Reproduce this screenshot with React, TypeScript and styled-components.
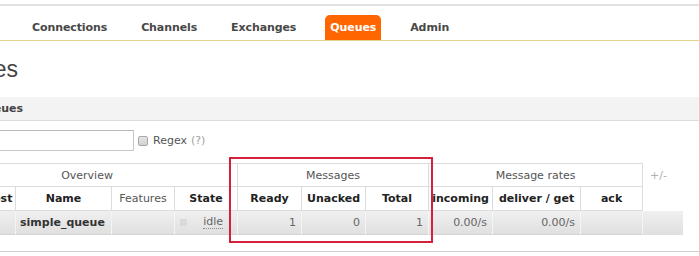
import React from "react";
import styled, { createGlobalStyle } from "styled-components";

const Global = createGlobalStyle`
  html, body { margin: 0; padding: 0; background: #fff; overflow: hidden; }
  body { font-family: "DejaVu Sans", Verdana, sans-serif; font-size: 11px; color: #484848; }
  * { box-sizing: border-box; }
`;

const Page = styled.div`
  width: 699px;
  height: 256px;
  overflow: hidden;
`;

const TopRule = styled.div`
  height: 6px;
  border-bottom: 2px solid #e2e2e2;
`;

const Nav = styled.ul`
  list-style: none;
  margin: 0;
  padding: 0 0 0 27px;
  height: 35px;
  border-bottom: 1px solid #e3d48e;
  display: flex;
  align-items: flex-end;
  gap: 24px;
`;

const NavItem = styled.li<{ $active?: boolean }>`
  height: 25px;
  line-height: 25px;
  padding: 0 5px;
  font-weight: bold;
  letter-spacing: -0.1px;
  border-radius: 5px 5px 0 0;
  color: ${(p) => (p.$active ? "#fff" : "#484848")};
  background: ${(p) => (p.$active ? "#ff6600" : "transparent")};
`;

const Main = styled.div`
  display: flex;
  flex-direction: column;
`;

const Tail = styled.span<{ $w: number }>`
  display: flex;
  justify-content: flex-end;
  width: ${(p) => p.$w}px;
  overflow: hidden;
  white-space: nowrap;
`;

const Title = styled.h1`
  margin: 15px 0 0;
  font-family: "Liberation Sans", Arial, sans-serif;
  font-weight: normal;
  font-size: 23px;
  line-height: 27px;
  color: #444;
`;

const SectionHeader = styled.h2`
  margin: 14px 0 0;
  height: 24px;
  background: #f3f3f3;
  border-bottom: 1px solid #dcdcdc;
  font-size: 11px;
  font-weight: bold;
  line-height: 23px;
  color: #444;
`;

const Section = styled.div`
  border-bottom: 1px solid #cfcfcf;
  padding-bottom: 16px;
`;

const FilterRow = styled.div`
  margin-top: 9px;
  display: flex;
  align-items: center;
  height: 21px;
  color: #555;
`;

const FilterInput = styled.input`
  flex-shrink: 0;
  width: 220px;
  height: 21px;
  border: 1px solid #c8c8c8;
  border-top-color: #b8b8b8;
  background: #fff;
  margin: 0;
`;

const Check = styled.span`
  width: 10px;
  height: 10px;
  margin: 0 5px 0 4px;
  border: 1px solid #a8a8a8;
  border-radius: 2px;
  background: linear-gradient(#e6e6e6, #d0d0d0);
`;

const Help = styled.span`
  color: #a0a0a0;
  margin-left: 4px;
`;

const TableWrap = styled.div`
  position: relative;
  margin-top: 12px;
`;

const Table = styled.table`
  border-collapse: separate;
  border-spacing: 0;
  table-layout: fixed;
  width: 686px;
  margin-left: -63px;
`;

const GroupTh = styled.th`
  height: 24px;
  padding: 0;
  border-top: 1px solid #dcdcdc;
  border-right: 1px solid #dcdcdc;
  border-bottom: 1px solid #dcdcdc;
  font-weight: normal;
  color: #555;
  text-align: center;
  background: #fff;
`;

const ColTh = styled.th<{ $plain?: boolean }>`
  height: 24px;
  padding: 0 2px;
  border-right: 1px solid #dcdcdc;
  border-bottom: 1px solid #dcdcdc;
  font-weight: ${(p) => (p.$plain ? "normal" : "bold")};
  color: ${(p) => (p.$plain ? "#555" : "#222")};
  text-align: center;
  white-space: nowrap;
  overflow: hidden;
  background: #fff;
`;

const PlusMinus = styled.th`
  padding: 0 0 0 7px;
  font-weight: normal;
  text-align: left;
  color: #b0b0b0;
  border: none;
`;

const Empty = styled.td`
  border: none;
  padding: 0;
`;

const Row = styled.tr`
  background: linear-gradient(#f0f0f0, #dfdfdf);
`;

const Td = styled.td<{ $align?: string; $bold?: boolean }>`
  height: 24px;
  padding: 0 5px 0 4px;
  border-right: 1px solid #f4f4f4;
  border-bottom: 1px solid #d4d4d4;
  text-align: ${(p) => p.$align || "right"};
  font-weight: ${(p) => (p.$bold ? "bold" : "normal")};
  color: ${(p) => (p.$bold ? "#333" : "#666")};
  white-space: nowrap;
`;

const StateCell = styled.div`
  display: flex;
  justify-content: space-between;
  align-items: center;
  padding: 0 9px 0 1px;
`;

const StateBox = styled.span`
  width: 7px;
  height: 7px;
  background: #dadada;
`;

const Abbr = styled.abbr`
  text-decoration: none;
  border-bottom: 1px dotted #888;
  line-height: 12px;
  color: #666;
`;

const Highlight = styled.div`
  position: absolute;
  left: 229px;
  top: -6px;
  width: 204px;
  height: 86px;
  border: 2px solid #d61f3b;
  pointer-events: none;
`;

const widths = [79, 96, 63, 63, 64, 64, 63, 64, 88, 62, 40];

export default function App() {
  return (
    <Page>
      <Global />
      <TopRule />
      <Nav>
        <NavItem>Connections</NavItem>
        <NavItem>Channels</NavItem>
        <NavItem>Exchanges</NavItem>
        <NavItem $active>Queues</NavItem>
        <NavItem>Admin</NavItem>
      </Nav>
      <Main>
        <Title>
          <Tail $w={18}>Queues</Tail>
        </Title>
        <Section>
          <SectionHeader>
            <Tail $w={23}>All queues</Tail>
          </SectionHeader>
          <FilterRow>
            <Tail $w={134}>
              <FilterInput type="text" />
            </Tail>
            <Check />
            Regex
            <Help>(?)</Help>
          </FilterRow>
          <TableWrap>
            <Table>
              <colgroup>
                {widths.map((w, i) => (
                  <col key={i} style={{ width: w }} />
                ))}
              </colgroup>
              <thead>
                <tr>
                  <GroupTh colSpan={4}>Overview</GroupTh>
                  <GroupTh colSpan={3}>Messages</GroupTh>
                  <GroupTh colSpan={3}>Message rates</GroupTh>
                  <PlusMinus>+/-</PlusMinus>
                </tr>
                <tr>
                  <ColTh>Virtual host</ColTh>
                  <ColTh>Name</ColTh>
                  <ColTh $plain>Features</ColTh>
                  <ColTh>State</ColTh>
                  <ColTh>Ready</ColTh>
                  <ColTh>Unacked</ColTh>
                  <ColTh>Total</ColTh>
                  <ColTh>incoming</ColTh>
                  <ColTh>deliver / get</ColTh>
                  <ColTh>ack</ColTh>
                  <Empty />
                </tr>
              </thead>
              <tbody>
                <Row>
                  <Td />
                  <Td $align="left" $bold>simple_queue</Td>
                  <Td />
                  <Td>
                    <StateCell>
                      <StateBox />
                      <Abbr title="idle">idle</Abbr>
                    </StateCell>
                  </Td>
                  <Td>1</Td>
                  <Td>0</Td>
                  <Td>1</Td>
                  <Td>0.00/s</Td>
                  <Td>0.00/s</Td>
                  <Td />
                  <Empty />
                </Row>
              </tbody>
            </Table>
            <Highlight />
          </TableWrap>
        </Section>
      </Main>
    </Page>
  );
}
